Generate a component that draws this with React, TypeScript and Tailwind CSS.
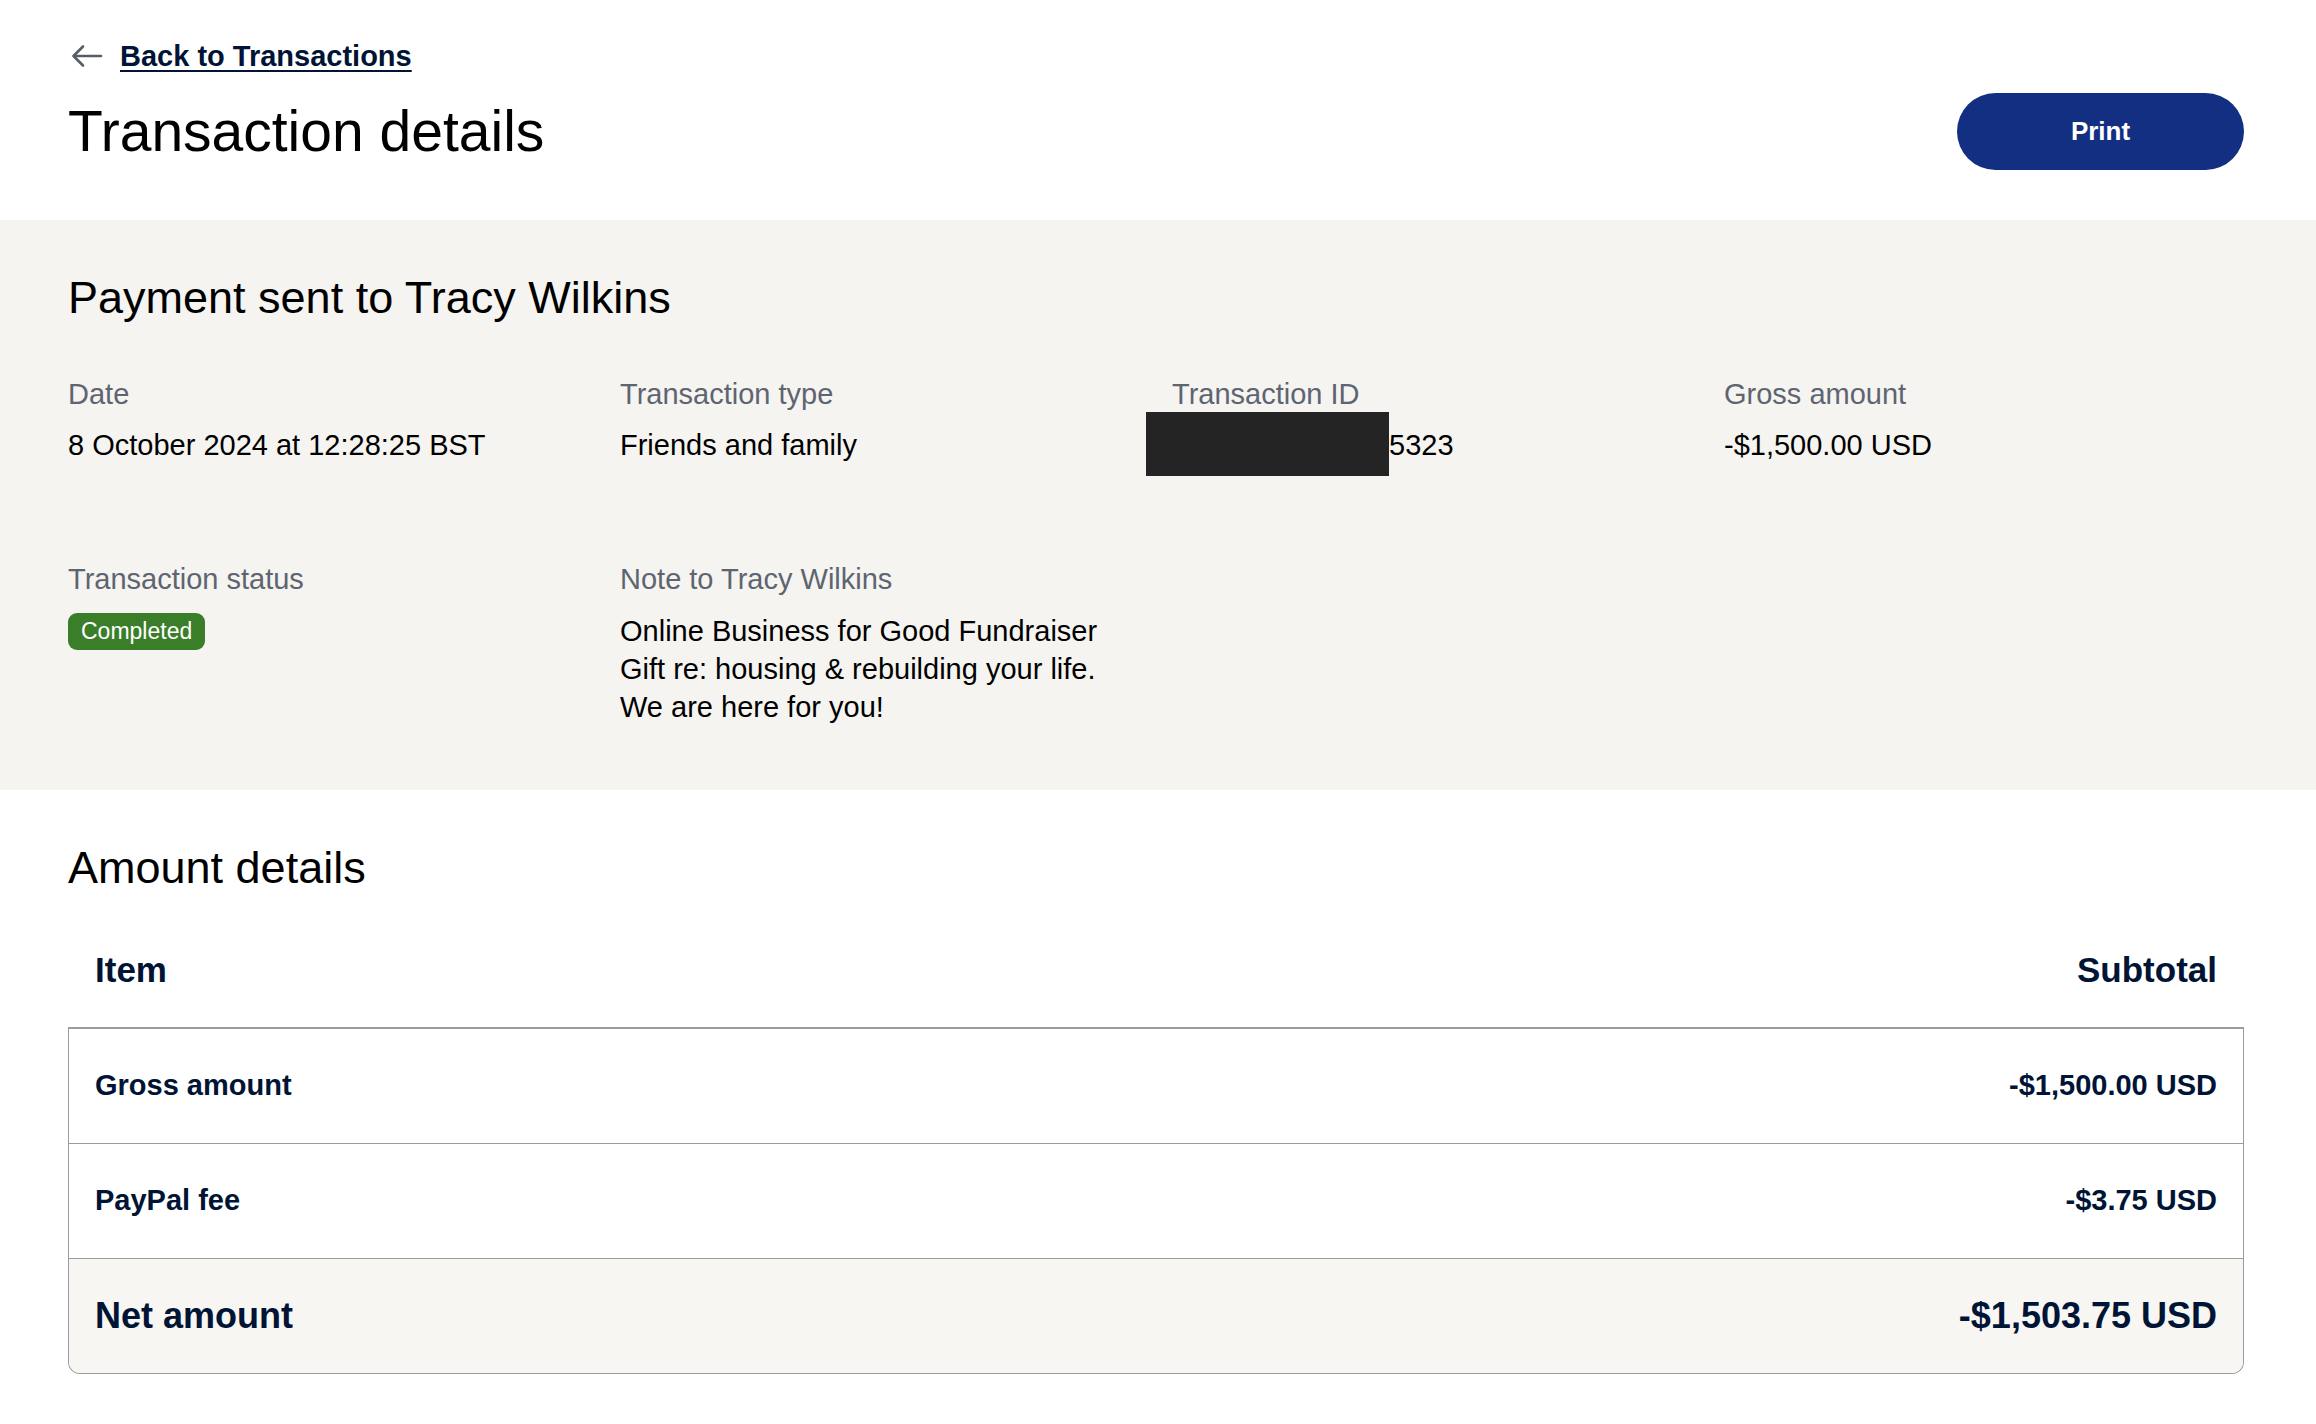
import React from 'react';

const font = "font-['Liberation_Sans',Arial,sans-serif]";

function BackArrow() {
  return (
    <svg width="32" height="24" viewBox="0 0 32 24" fill="none" stroke="#545d68" strokeWidth="2.6" strokeLinecap="round" strokeLinejoin="round">
      <path d="M30 12H3" />
      <path d="M12 2.5L2.5 12L12 21.5" />
    </svg>
  );
}

function Field({ label, children }: { label: string; children: React.ReactNode }) {
  return (
    <div>
      <div className="text-[29px] leading-[38px] text-[#5e6470]">{label}</div>
      <div className="mt-[13px] text-[29px] leading-[38px] text-black">{children}</div>
    </div>
  );
}

const rows = [
  { item: 'Gross amount', amount: '-$1,500.00 USD' },
  { item: 'PayPal fee', amount: '-$3.75 USD' },
];

export default function App() {
  return (
    <div className={`${font} min-h-screen w-full bg-white`}>
      {/* header */}
      <div className="pl-[68px] pr-[72px] pt-[39px] pb-[50px]">
        <a href="#" className="flex items-center gap-[17px] h-[34px] pl-[3px]">
          <BackArrow />
          <span className="text-[29px] leading-[34px] font-bold text-[#001435] underline underline-offset-4 decoration-2">
            Back to Transactions
          </span>
        </a>
        <div className="mt-[20px] flex items-center justify-between">
          <h1 className="text-[57px] leading-[67px] text-black">Transaction details</h1>
          <button className="w-[287px] h-[77px] rounded-full bg-[#122f82] text-white text-[26px] font-bold">
            Print
          </button>
        </div>
      </div>

      {/* summary band */}
      <div className="bg-[#f5f4f0] pl-[68px] pr-[72px] pt-[50px] pb-[64px]">
        <h2 className="text-[45px] leading-[56px] text-black">Payment sent to Tracy Wilkins</h2>
        <div className="mt-[49px] grid grid-cols-4 gap-x-[32px] gap-y-[96px]">
          <Field label="Date">8 October 2024 at 12:28:25 BST</Field>
          <Field label="Transaction type">Friends and family</Field>
          <Field label="Transaction ID">
            <span className="relative inline-block">
              <span className="inline-block w-[217px]" />
              5323
              <span className="absolute left-[-26px] top-[-14px] w-[243px] h-[64px] bg-[#242424]" />
            </span>
          </Field>
          <Field label="Gross amount">-$1,500.00 USD</Field>
          <div>
            <div className="text-[29px] leading-[38px] text-[#5e6470]">Transaction status</div>
            <span className="mt-[15px] inline-flex items-center h-[37px] px-[13px] rounded-[9px] bg-[#3b7e29] text-white text-[23px] font-medium">
              Completed
            </span>
          </div>
          <div>
            <div className="text-[29px] leading-[38px] text-[#5e6470]">Note to Tracy Wilkins</div>
            <div className="mt-[14px] text-[29px] leading-[38px] text-black">
              <div>Online Business for Good Fundraiser</div>
              <div>Gift re: housing &amp; rebuilding your life.</div>
              <div>We are here for you!</div>
            </div>
          </div>
        </div>
      </div>

      {/* amount details */}
      <div className="pl-[68px] pr-[72px] pt-[51px] pb-[52px]">
        <h2 className="text-[45px] leading-[54px] text-black">Amount details</h2>
        <div className="mt-[54px] px-[27px] pb-[36px] flex items-center justify-between text-[35px] leading-[42px] font-bold text-[#001435]">
          <span>Item</span>
          <span>Subtotal</span>
        </div>
        <div className="border border-[#9b9b9b] border-t-2 rounded-b-[12px] text-[#001435]">
          {rows.map((r) => (
            <div key={r.item} className="h-[115px] px-[26px] flex items-center justify-between border-b border-[#9b9b9b] text-[29px] font-bold">
              <span>{r.item}</span>
              <span>{r.amount}</span>
            </div>
          ))}
          <div className="h-[114px] px-[26px] flex items-center justify-between bg-[#f7f6f3] rounded-b-[12px] text-[36px] font-bold">
            <span>Net amount</span>
            <span>-$1,503.75 USD</span>
          </div>
        </div>
      </div>
    </div>
  );
}
